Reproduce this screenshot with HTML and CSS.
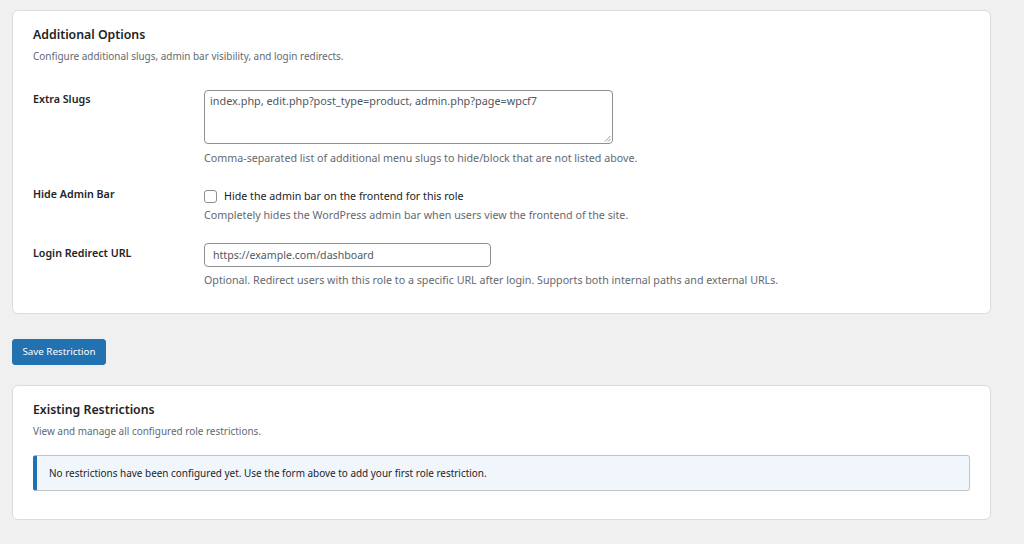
FILE: index.html
```html
<!DOCTYPE html>
<html>
<head>
<meta charset="utf-8">
<link rel="stylesheet" href="styles.css">
</head>
<body>
<div class="page">
  <section class="card card-options">
    <h2 class="card-title">Additional Options</h2>
    <p class="card-desc">Configure additional slugs, admin bar visibility, and login redirects.</p>
    <div class="form-grid">
      <div class="row row-slugs">
        <div class="label">Extra Slugs</div>
        <div class="field">
          <div class="textarea">index.php, edit.php?post_type=product, admin.php?page=wpcf7<svg class="grip" width="7" height="7" viewBox="0 0 7 7"><path d="M6.5 1 L1 6.5 M6.5 4 L4 6.5" stroke="#8c8f94" stroke-width="0.9" fill="none"/></svg></div>
          <p class="help help-slugs">Comma-separated list of additional menu slugs to hide/block that are not listed above.</p>
        </div>
      </div>
      <div class="row row-bar">
        <div class="label">Hide Admin Bar</div>
        <div class="field">
          <label class="check"><span class="box"></span>Hide the admin bar on the frontend for this role</label>
          <p class="help help-bar">Completely hides the WordPress admin bar when users view the frontend of the site.</p>
        </div>
      </div>
      <div class="row row-url">
        <div class="label">Login Redirect URL</div>
        <div class="field">
          <div class="input">https://example.com/dashboard</div>
          <p class="help help-url">Optional. Redirect users with this role to a specific URL after login. Supports both internal paths and external URLs.</p>
        </div>
      </div>
    </div>
  </section>
  <div class="actions"><button class="btn">Save Restriction</button></div>
  <section class="card card-existing">
    <h2 class="card-title">Existing Restrictions</h2>
    <p class="card-desc">View and manage all configured role restrictions.</p>
    <div class="notice">No restrictions have been configured yet. Use the form above to add your first role restriction.</div>
  </section>
</div>
</body>
</html>
```
FILE: styles.css
```css
* { box-sizing: border-box; }
html, body { margin: 0; padding: 0; }
body {
  background: #f0f0f1;
  font-family: "Noto Sans", "Open Sans", sans-serif;
  color: #1d2327;
  width: 1024px;
  height: 544px;
  overflow: hidden;
}
.page {
  padding: 10px 33px 0 12px;
}
.card {
  background: #fff;
  border: 1px solid #dcdcde;
  border-radius: 6px;
  padding: 15px 20px 0 20px;
}
.card-options { height: 304px; }
.card-existing { height: 135px; }
.card-title {
  margin: 0;
  font-size: 12.3px;
  font-weight: 600;
  line-height: 18px;
  color: #1d2327;
}
.card-desc {
  margin: 5px 0 0;
  font-size: 9.95px;
  line-height: 14px;
  color: #646970;
}
.form-grid {
  margin-top: 27px;
  display: flex;
  flex-direction: column;
}
.row {
  display: grid;
  grid-template-columns: 171px 408px;
}
.row-bar { margin-top: 19px; }
.row-url { margin-top: 20px; }
.label {
  font-size: 10.7px;
  font-weight: 600;
  line-height: 16px;
  padding-top: 1px;
}
.row-url .label { padding-top: 2px; }
.field { display: flex; flex-direction: column; }
.textarea {
  position: relative;
  height: 54px;
  border: 1px solid #8c8f94;
  border-radius: 4px;
  padding: 3px 5px;
  font-size: 10.85px;
  line-height: 14px;
  color: #50575e;
  width: 409px;
}
.grip { position: absolute; right: 1px; bottom: 1px; }
.help {
  margin: 0;
  font-size: 10.7px;
  line-height: 15px;
  color: #646970;
  white-space: nowrap;
}
.help-slugs { margin-top: 7px; }
.check {
  display: flex;
  align-items: center;
  padding-top: 3px;
  font-size: 10.7px;
  line-height: 16px;
  color: #1d2327;
}
.box {
  width: 13px;
  height: 13px;
  border: 1px solid #8c8f94;
  border-radius: 3px;
  margin-right: 7px;
  background: #fff;
}
.help-bar { margin-top: 4px; }
.input {
  width: 287px;
  height: 24px;
  border: 1px solid #8c8f94;
  border-radius: 4px;
  padding: 0 8px;
  font-size: 10.6px;
  line-height: 22px;
  color: #50575e;
}
.help-url { margin-top: 6px; }
.actions { padding: 25px 0 20px; }
.btn {
  display: block;
  background: #2271b1;
  color: #fff;
  border: 1px solid #2271b1;
  border-radius: 3px;
  height: 26px;
  width: 94px;
  padding: 0;
  font-family: "Noto Sans", "Open Sans", sans-serif;
  font-size: 9.8px;
  line-height: 24px;
}
.notice {
  margin-top: 17px;
  margin-right: 0;
  background: #f0f6fc;
  border: 1px solid #c3c4c7;
  border-left: 4px solid #2271b1;
  border-radius: 3px;
  height: 36px;
  padding: 0 12px;
  font-size: 9.95px;
  line-height: 34px;
  color: #1d2327;
}
```
